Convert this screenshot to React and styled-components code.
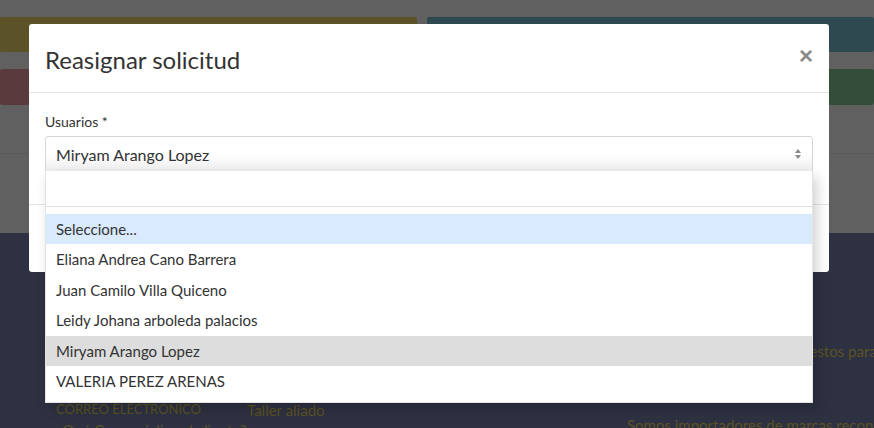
import React from "react";
import styled, { createGlobalStyle } from "styled-components";

const GlobalStyle = createGlobalStyle`
  html, body {
    margin: 0;
    padding: 0;
    height: 428px;
    overflow: hidden;
    background: #606060;
    font-family: "Lato", "Open Sans", sans-serif;
  }
  * { box-sizing: border-box; }
`;

const users = [
  "Seleccione...",
  "Eliana Andrea Cano Barrera",
  "Juan Camilo Villa Quiceno",
  "Leidy Johana arboleda palacios",
  "Miryam Arango Lopez",
  "VALERIA PEREZ ARENAS",
];

const Page = styled.div`
  position: relative;
  width: 874px;
  height: 428px;
  overflow: hidden;
`;

const TopArea = styled.section`
  padding-top: 17px;
  height: 233px;
  display: flex;
  flex-direction: column;
  gap: 17px;
`;

const CardRow = styled.div`
  display: grid;
  grid-template-columns: 417px 1fr;
  column-gap: 10px;
  height: ${({ $h }) => $h}px;
`;

const Card = styled.div`
  background: ${({ $color }) => $color};
  border-radius: 2px;
`;

const Divider = styled.div`
  margin-top: 31px;
  height: 1px;
  background: #595959;
`;

const Footer = styled.footer`
  height: 195px;
  background: #2e3141;
  display: grid;
  grid-template-columns: 191px 380px 1fr;
  padding-left: 56px;
  color: #5b5125;
  font-family: "Lato", sans-serif;
  white-space: nowrap;
`;

const FooterCol = styled.div`
  padding-top: ${({ $top }) => $top}px;
  display: flex;
  flex-direction: column;
  gap: ${({ $gap }) => $gap || 0}px;
`;

const FooterCaps = styled.span`
  font-size: 13px;
  text-transform: uppercase;
  line-height: 16px;
`;

const FooterText = styled.span`
  font-size: 15px;
  line-height: 18px;
`;

const Modal = styled.div`
  position: absolute;
  left: 29px;
  top: 24px;
  width: 800px;
  height: 248px;
  background: #fff;
  border-radius: 3px;
  display: flex;
  flex-direction: column;
`;

const ModalHeader = styled.header`
  height: 69px;
  border-bottom: 1px solid #e5e5e5;
  display: flex;
  align-items: center;
  justify-content: space-between;
  padding: 0 16px 0 16px;
`;

const Title = styled.h4`
  margin: 0;
  font-size: 24px;
  font-weight: 400;
  color: #333;
  padding-top: 2px;
`;

const Close = styled.button`
  border: 0;
  background: none;
  padding: 0;
  color: #8a8a8a;
  font-size: 24px;
  font-weight: 700;
  line-height: 1;
  font-family: "Liberation Sans", sans-serif;
  margin-top: -4px;
`;

const ModalBody = styled.div`
  height: 111px;
  padding: 20px 16px 0 16px;
`;

const Label = styled.label`
  display: block;
  font-size: 14px;
  line-height: 18px;
  color: #333;
  margin-bottom: 5px;
`;

const SelectWrap = styled.div`
  position: relative;
`;

const SelectBox = styled.div`
  height: 36px;
  border: 1px solid #d6d6d6;
  border-radius: 3px 3px 0 0;
  background: linear-gradient(to bottom, #fff 50%, #eeeeee 100%);
  display: flex;
  align-items: center;
  justify-content: space-between;
  padding: 0 10px 0 10px;
  font-size: 16px;
  color: #333;
`;

const Arrows = styled.svg`
  width: 6px;
  height: 10px;
  margin-right: 1px;
`;

const Dropdown = styled.div`
  position: absolute;
  left: 0;
  top: 35px;
  width: 768px;
  background: #fff;
  border: 1px solid #e3e3e3;
  border-top: 0;
  box-shadow: 4px 6px 12px rgba(0, 0, 0, 0.18);
  padding-bottom: 6px;
`;

const SearchArea = styled.div`
  height: 36px;
  border-bottom: 1px solid #e0e0e0;
  margin-bottom: 7px;
`;

const Option = styled.div`
  height: 30.4px;
  line-height: 30px;
  padding-left: 10px;
  font-size: 15px;
  color: #333;
  background: ${({ $state }) =>
    $state === "hover" ? "#d9eafc" : $state === "selected" ? "#dddddd" : "#fff"};
`;

const ModalFooter = styled.div`
  flex: 1;
  border-top: 1px solid #e5e5e5;
`;

export default function App() {
  return (
    <>
      <GlobalStyle />
      <Page>
        <TopArea>
          <CardRow $h={35}>
            <Card $color="#5b5228" />
            <Card $color="#2e4a50" />
          </CardRow>
          <CardRow $h={36}>
            <Card $color="#5a3a3d" />
            <Card $color="#334d3a" />
          </CardRow>
          <Divider />
        </TopArea>
        <Footer>
          <FooterCol $top={168} $gap={4}>
            <FooterCaps>Correo electronico</FooterCaps>
            <FooterText>¿Qué Comercializa el cliente?</FooterText>
          </FooterCol>
          <FooterCol $top={168}>
            <FooterText>Taller aliado</FooterText>
          </FooterCol>
          <FooterCol $top={109} $gap={56}>
            <FooterText>Somos importadora de repuestos para motos</FooterText>
            <FooterText>Somos importadores de marcas reconocidas</FooterText>
          </FooterCol>
        </Footer>

        <Modal>
          <ModalHeader>
            <Title>Reasignar solicitud</Title>
            <Close aria-label="Cerrar">×</Close>
          </ModalHeader>
          <ModalBody>
            <Label>Usuarios *</Label>
            <SelectWrap>
              <SelectBox>
                <span>Miryam Arango Lopez</span>
                <Arrows viewBox="0 0 6 10">
                  <path d="M3 0 L6 4 L0 4 Z" fill="#888" />
                  <path d="M0 6 L6 6 L3 10 Z" fill="#888" />
                </Arrows>
              </SelectBox>
              <Dropdown>
                <SearchArea />
                {users.map((u, i) => (
                  <Option
                    key={u}
                    $state={i === 0 ? "hover" : u === "Miryam Arango Lopez" ? "selected" : ""}
                  >
                    {u}
                  </Option>
                ))}
              </Dropdown>
            </SelectWrap>
          </ModalBody>
          <ModalFooter />
        </Modal>
      </Page>
    </>
  );
}
